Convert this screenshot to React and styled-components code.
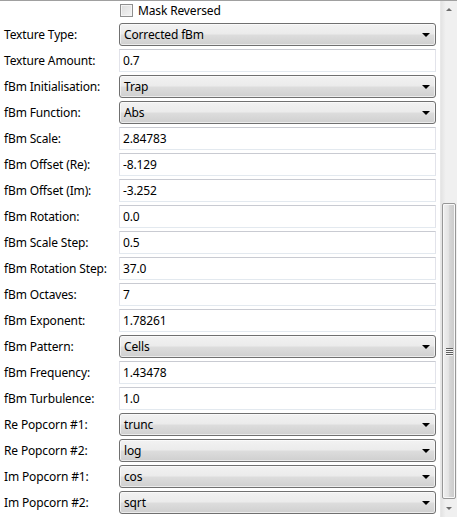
import React from 'react';
import styled, { createGlobalStyle } from 'styled-components';

const GlobalStyle = createGlobalStyle`
  body {
    margin: 0;
    background: #fff;
    font-family: "Noto Sans", "Open Sans", sans-serif;
    font-size: 12px;
    letter-spacing: -0.15px;
    color: #000;
  }
`;

const Panel = styled.div`
  width: 457px;
  height: 517px;
  box-sizing: border-box;
  border-top: 1px solid #a0a0a0;
  display: flex;
  overflow: hidden;
  background: #fff;
`;

const Content = styled.div`
  flex: 1;
  display: flex;
  flex-direction: column;
  gap: 3px;
  padding: 0 4px 0 4px;
`;

const Row = styled.div`
  display: grid;
  grid-template-columns: 115px 317px;
  align-items: center;
  height: ${p => (p.$short ? '19px' : '23px')};
`;

const Label = styled.span`
  white-space: nowrap;
  line-height: 23px;
`;

const CheckRow = styled.label`
  grid-column: 2;
  display: flex;
  align-items: center;
  gap: 5px;
  padding-left: 1px;
`;

const CheckBox = styled.span`
  width: 11px;
  height: 11px;
  border: 1px solid #8f8f8f;
  background: linear-gradient(135deg, #dcdcdc 0%, #f4f4f4 100%);
  box-shadow: inset 0 0 0 1px #f4f4f4;
`;

const Combo = styled.div`
  box-sizing: border-box;
  height: 23px;
  border: 1px solid #707070;
  border-radius: 3px;
  background: linear-gradient(#f2f2f2 0%, #ebebeb 48%, #dddddd 52%, #cfcfcf 100%);
  box-shadow: inset 0 0 0 1px rgba(255, 255, 255, 0.6);
  display: flex;
  align-items: center;
  justify-content: space-between;
  padding: 0 5px 0 4px;
`;

const Arrow = styled.span`
  width: 0;
  height: 0;
  border-left: 4px solid transparent;
  border-right: 4px solid transparent;
  border-top: 4px solid #000;
  margin-top: 1px;
`;

const Input = styled.div`
  box-sizing: border-box;
  height: 23px;
  border: 1px solid #e2e3ea;
  border-top-color: #c9cbd2;
  border-bottom-color: #e3e9ef;
  background: #fff;
  display: flex;
  align-items: center;
  padding-left: 3px;
`;

const ScrollBar = styled.div`
  width: 17px;
  display: flex;
  flex-direction: column;
  align-items: center;
  background: linear-gradient(90deg, #e3e3e3, #f0f0f0 30%, #f0f0f0);
  border-left: 1px solid #e8e8e8;
`;

const ArrowBtn = styled.div`
  height: 17px;
  width: 100%;
  display: flex;
  align-items: center;
  justify-content: center;
`;

const SmallTri = styled.span`
  width: 0;
  height: 0;
  border-left: 3px solid transparent;
  border-right: 3px solid transparent;
  ${p => (p.$up ? 'border-bottom: 3px solid #6c6c6c;' : 'border-top: 3px solid #6c6c6c;')}
`;

const Track = styled.div`
  flex: 1;
  width: 100%;
  display: flex;
  flex-direction: column;
`;

const Thumb = styled.div`
  margin: ${p => p.$offset}px 1px 0 1px;
  height: ${p => p.$size}px;
  box-sizing: border-box;
  border: 1px solid #979797;
  border-radius: 2px;
  background: linear-gradient(90deg, #f0f0f0 0%, #e4e4e4 45%, #d6d6d6 55%, #cacaca 100%);
  box-shadow: inset 0 0 0 1px #f8f8f8;
  display: flex;
  flex-direction: column;
  align-items: center;
  justify-content: center;
  gap: 1px;
`;

const Grip = styled.span`
  width: 7px;
  height: 1px;
  background: #5f5f5f;
  box-shadow: 0 1px 0 #f5f5f5;
`;

const rows = [
  ['Texture Type:', 'combo', 'Corrected fBm'],
  ['Texture Amount:', 'input', '0.7'],
  ['fBm Initialisation:', 'combo', 'Trap'],
  ['fBm Function:', 'combo', 'Abs'],
  ['fBm Scale:', 'input', '2.84783'],
  ['fBm Offset (Re):', 'input', '-8.129'],
  ['fBm Offset (Im):', 'input', '-3.252'],
  ['fBm Rotation:', 'input', '0.0'],
  ['fBm Scale Step:', 'input', '0.5'],
  ['fBm Rotation Step:', 'input', '37.0'],
  ['fBm Octaves:', 'input', '7'],
  ['fBm Exponent:', 'input', '1.78261'],
  ['fBm Pattern:', 'combo', 'Cells'],
  ['fBm Frequency:', 'input', '1.43478'],
  ['fBm Turbulence:', 'input', '1.0'],
  ['Re Popcorn #1:', 'combo', 'trunc'],
  ['Re Popcorn #2:', 'combo', 'log'],
  ['Im Popcorn #1:', 'combo', 'cos'],
  ['Im Popcorn #2:', 'combo', 'sqrt'],
];

export default function App() {
  return (
    <>
      <GlobalStyle />
      <Panel>
        <Content>
          <Row $short>
            <CheckRow>
              <CheckBox />
              <span>Mask Reversed</span>
            </CheckRow>
          </Row>
          {rows.map(([label, kind, value]) => (
            <Row key={label}>
              <Label>{label}</Label>
              {kind === 'combo' ? (
                <Combo>
                  <span>{value}</span>
                  <Arrow />
                </Combo>
              ) : (
                <Input>{value}</Input>
              )}
            </Row>
          ))}
        </Content>
        <ScrollBar>
          <ArrowBtn>
            <SmallTri $up />
          </ArrowBtn>
          <Track>
            <Thumb $offset={185} $size={296}>
              <Grip />
              <Grip />
              <Grip />
              <Grip />
            </Thumb>
          </Track>
          <ArrowBtn>
            <SmallTri />
          </ArrowBtn>
        </ScrollBar>
      </Panel>
    </>
  );
}
